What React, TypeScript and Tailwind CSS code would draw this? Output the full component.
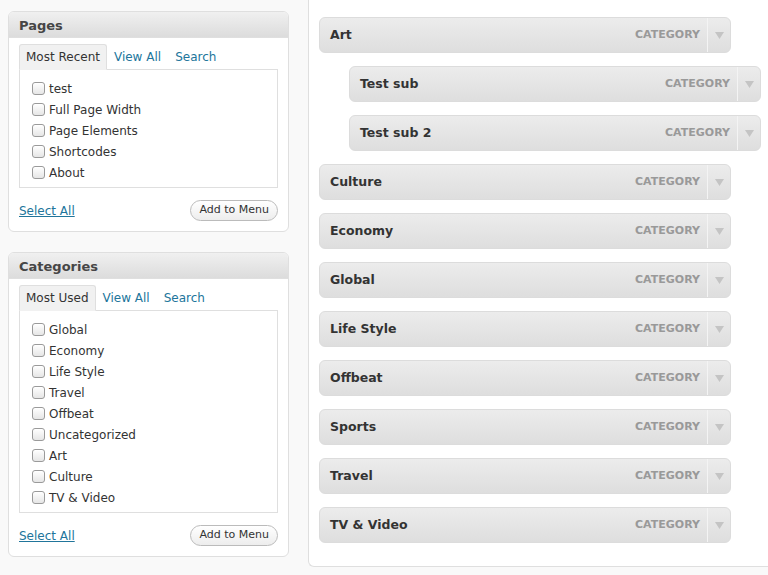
import React from "react";

const pages = ["test", "Full Page Width", "Page Elements", "Shortcodes", "About"];
const cats = ["Global", "Economy", "Life Style", "Travel", "Offbeat", "Uncategorized", "Art", "Culture", "TV & Video"];

const menuItems = [
  { title: "Art", sub: false },
  { title: "Test sub", sub: true },
  { title: "Test sub 2", sub: true },
  { title: "Culture", sub: false },
  { title: "Economy", sub: false },
  { title: "Global", sub: false },
  { title: "Life Style", sub: false },
  { title: "Offbeat", sub: false },
  { title: "Sports", sub: false },
  { title: "Travel", sub: false },
  { title: "TV & Video", sub: false },
];

function Checkbox() {
  return (
    <span className="inline-block w-[13px] h-[13px] rounded-[3px] border border-[#9a9a9a] bg-gradient-to-b from-white to-[#e6e6e6] shadow-[inset_0_1px_0_#fff] shrink-0" />
  );
}

function Box({ title, tabs, items }: { title: string; tabs: string[]; items: string[] }) {
  return (
    <div className="rounded-[6px] border border-[#dfdfdf] bg-white overflow-hidden">
      <div className="h-[26px] bg-gradient-to-b from-[#f0f0f0] to-[#dcdcdc] border-b border-[#dfdfdf] px-[10px] pt-[2px] flex items-center">
        <span className="font-bold text-[13px] text-[#464646]">{title}</span>
      </div>
      <div className="px-[10px] pt-[6px]">
        <div className="flex items-end h-[25px]">
          {tabs.map((t, i) =>
            i === 0 ? (
              <div key={t} className="h-[26px] -mb-px relative z-10 px-[6px] flex items-center bg-[#f1f1f1] border border-[#dfdfdf] border-b-[#f1f1f1] rounded-t-[3px] text-[12px] text-[#333]">
                {t}
              </div>
            ) : (
              <div key={t} className="px-[7px] h-[25px] flex items-center text-[12px] text-[#21759b]">
                {t}
              </div>
            )
          )}
        </div>
        <div className="border border-[#dfdfdf] pl-[12px] pt-[8px] pb-[4px]">
          {items.map((it) => (
            <div key={it} className="h-[21px] flex items-center gap-[4px] text-[12px] text-[#333]">
              <Checkbox />
              <span>{it}</span>
            </div>
          ))}
        </div>
        <div className="flex items-center justify-between pt-[12px] pb-[10px]">
          <span className="text-[12px] text-[#21759b] underline">Select All</span>
          <span className="h-[21px] px-[8px] flex items-center rounded-full border border-[#bbb] bg-gradient-to-b from-white to-[#ededed] text-[11px] text-[#333]">
            Add to Menu
          </span>
        </div>
      </div>
    </div>
  );
}

function MenuItem({ title, sub }: { title: string; sub: boolean }) {
  return (
    <div className={`h-[36px] w-[412px] flex items-stretch rounded-[6px] border border-[#dcdcdc] bg-gradient-to-b from-[#ececec] to-[#dedede] ${sub ? "ml-[30px]" : ""}`}>
      <div className="flex-1 flex items-center justify-between pl-[10px] pr-[7px]">
        <span className="font-bold text-[12.5px] text-[#333]">{title}</span>
        <span className="font-bold text-[11px] text-[#999]">CATEGORY</span>
      </div>
      <div className="w-[23px] border-l border-[#f4f4f4] flex items-center justify-center">
        <svg width="9" height="8" viewBox="0 0 9 8">
          <path d="M0 1 L9 1 L4.5 8 Z" fill="#c4c4c4" />
        </svg>
      </div>
    </div>
  );
}

export default function App() {
  return (
    <div className="w-[768px] h-[575px] overflow-hidden bg-[#f9f9f9] flex gap-[19px] pl-[8px]" style={{ fontFamily: '"Lucida Grande", "DejaVu Sans", sans-serif' }}>
      <div className="w-[281px] shrink-0 pt-[11px] flex flex-col gap-[20px]">
        <Box title="Pages" tabs={["Most Recent", "View All", "Search"]} items={pages} />
        <Box title="Categories" tabs={["Most Used", "View All", "Search"]} items={cats} />
      </div>
      <div className="flex-1 h-[567px] bg-white border-l border-b border-[#dfdfdf] rounded-bl-[6px] pl-[10px] pt-[17px] flex flex-col gap-[13px]">
        {menuItems.map((m) => (
          <MenuItem key={m.title} title={m.title} sub={m.sub} />
        ))}
      </div>
    </div>
  );
}
